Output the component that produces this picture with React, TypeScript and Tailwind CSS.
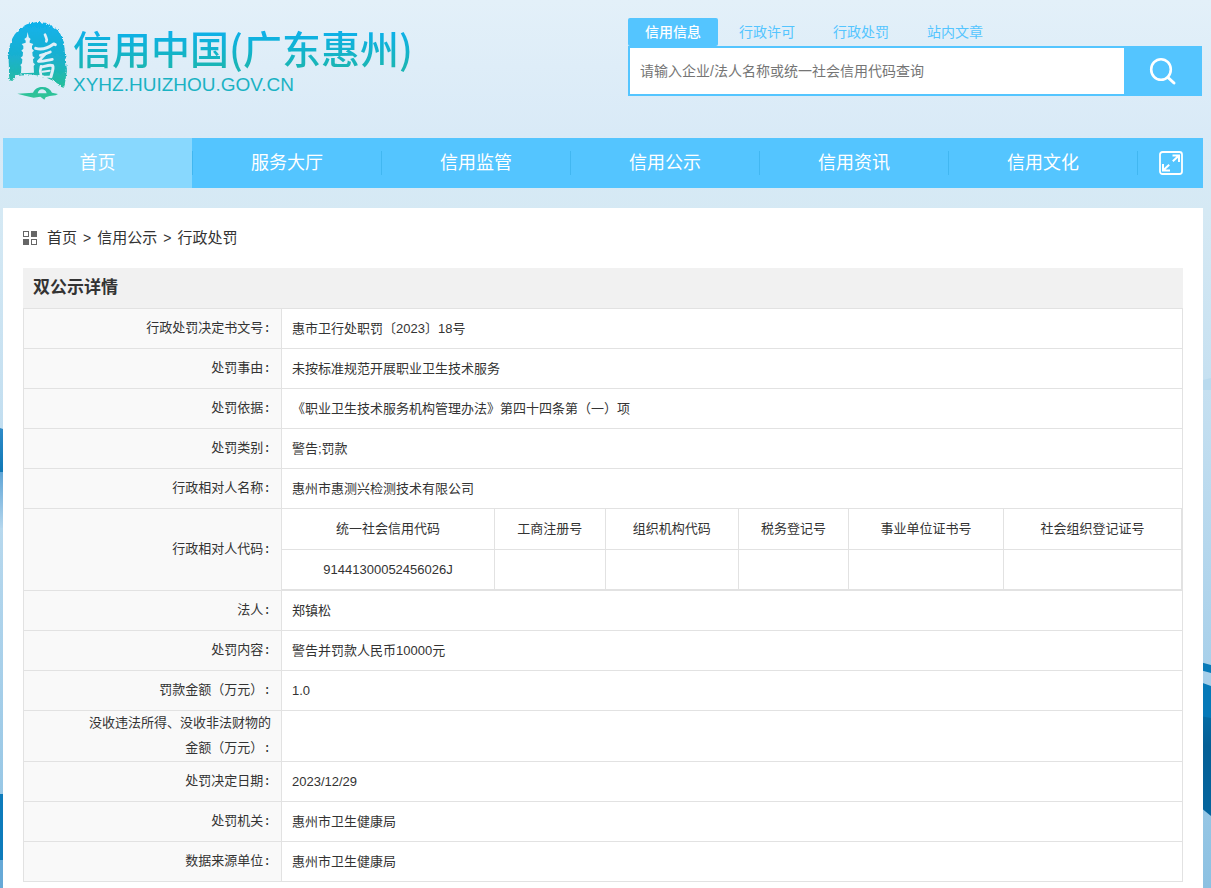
import React from "react";

const sans = "font-['Liberation_Sans','Noto_Sans_CJK_SC',sans-serif]";

const searchTabs = ["信用信息", "行政许可", "行政处罚", "站内文章"];
const navItems = ["首页", "服务大厅", "信用监管", "信用公示", "信用资讯", "信用文化"];
const breadcrumb = ["首页", "信用公示", "行政处罚"];

const codeColumns = [
  { name: "统一社会信用代码", value: "91441300052456026J", width: "w-[23.7%]" },
  { name: "工商注册号", value: "", width: "w-[12.3%]" },
  { name: "组织机构代码", value: "", width: "w-[14.8%]" },
  { name: "税务登记号", value: "", width: "w-[12.3%]" },
  { name: "事业单位证书号", value: "", width: "w-[17.2%]" },
  { name: "社会组织登记证号", value: "", width: "w-[19.7%]" },
];

type Row = { label: string; value: React.ReactNode; nested?: boolean };

const rows: Row[] = [
  { label: "行政处罚决定书文号:", value: "惠市卫行处职罚〔2023〕18号" },
  { label: "处罚事由:", value: "未按标准规范开展职业卫生技术服务" },
  { label: "处罚依据:", value: "《职业卫生技术服务机构管理办法》第四十四条第（一）项" },
  { label: "处罚类别:", value: "警告;罚款" },
  { label: "行政相对人名称:", value: "惠州市惠测兴检测技术有限公司" },
  { label: "行政相对人代码:", value: <CodeTable />, nested: true },
  { label: "法人:", value: "郑镇松" },
  { label: "处罚内容:", value: "警告并罚款人民币10000元" },
  { label: "罚款金额（万元）:", value: "1.0" },
  { label: "没收违法所得、没收非法财物的金额（万元）:", value: "" },
  { label: "处罚决定日期:", value: "2023/12/29" },
  { label: "处罚机关:", value: "惠州市卫生健康局" },
  { label: "数据来源单位:", value: "惠州市卫生健康局" },
];

function CodeTable() {
  return (
    <table className="w-full table-fixed border-separate border-spacing-0 border-r border-[#e2e2e2] text-center">
      <thead>
        <tr>
          {codeColumns.map((c) => (
            <th key={c.name} className={`h-[41px] border-b border-r border-[#e2e2e2] p-0 pb-0.5 font-normal last:border-r-0 ${c.width}`}>
              {c.name}
            </th>
          ))}
        </tr>
      </thead>
      <tbody>
        <tr>
          {codeColumns.map((c) => (
            <td key={c.name} className="h-10 border-b border-r border-[#e2e2e2] p-0 last:border-r-0">
              {c.value}
            </td>
          ))}
        </tr>
      </tbody>
    </table>
  );
}

function Backdrop() {
  return (
    <svg className="absolute inset-0 -z-10 h-full w-full" viewBox="0 0 1211 888" preserveAspectRatio="none" aria-hidden="true">
      <defs>
        <linearGradient id="sky" x1="0" y1="0" x2="0" y2="1">
          <stop offset="0" stopColor="#e3f0f9" />
          <stop offset="0.15" stopColor="#d9eaf7" />
          <stop offset="0.24" stopColor="#d5e9f4" />
          <stop offset="0.48" stopColor="#c2def0" />
          <stop offset="0.75" stopColor="#a8d0ea" />
          <stop offset="1" stopColor="#8cc1e2" />
        </linearGradient>
        <linearGradient id="waveA" x1="0" y1="0" x2="0" y2="1">
          <stop offset="0" stopColor="#2f8bc8" />
          <stop offset="1" stopColor="#0f78b6" />
        </linearGradient>
        <linearGradient id="mist" x1="0" y1="0" x2="0" y2="1">
          <stop offset="0" stopColor="#5fa5d6" />
          <stop offset="1" stopColor="#b4d6ed" />
        </linearGradient>
        <linearGradient id="waveB" x1="0" y1="0" x2="0" y2="1">
          <stop offset="0" stopColor="#046ba4" />
          <stop offset="0.3" stopColor="#045f96" />
          <stop offset="1" stopColor="#04659e" />
        </linearGradient>
      </defs>
      <rect width="1211" height="888" fill="url(#sky)" />
      <path d="M0 428 L6 430 V472 H0 Z" fill="url(#waveA)" />
      <rect y="472" width="6" height="56" fill="url(#mist)" />
      <rect y="794" width="6" height="66" fill="#0d7bbb" />
      <rect y="860" width="6" height="28" fill="#66a9d7" />
      <path d="M1203 380 L1211 378 V390 H1203 Z" fill="#b9daee" />
      <path d="M1200 662 L1211 665 V673 L1200 670 Z" fill="#087ab8" />
      <path d="M1200 682 L1211 686 V718 H1200 Z" fill="#0579b8" />
      <path d="M1200 716 L1211 718 V816 L1200 807 Z" fill="url(#waveB)" />
    </svg>
  );
}

function Emblem() {
  return (
    <svg className="h-20 w-[62px] shrink-0" viewBox="20 30 186 240" aria-hidden="true">
      <defs>
        <linearGradient id="ink" gradientUnits="userSpaceOnUse" x1="0" y1="36" x2="0" y2="268">
          <stop offset="0" stopColor="#10b2ec" />
          <stop offset="0.45" stopColor="#1ab0cf" />
          <stop offset="0.8" stopColor="#23bd9f" />
          <stop offset="1" stopColor="#33c596" />
        </linearGradient>
        <filter id="rough" x="-10%" y="-10%" width="120%" height="120%">
          <feTurbulence type="fractalNoise" baseFrequency="0.14" numOctaves="2" seed="4" />
          <feDisplacementMap in="SourceGraphic" scale="12" xChannelSelector="R" yChannelSelector="G" />
        </filter>
      </defs>
      <path
        d="M27 212 L25 150 C24 105 34 76 60 56 C84 34 124 30 150 46 C184 62 192 90 194 130 L200 182 L192 230 L180 228 C162 208 104 184 46 196 L38 212 Z"
        fill="url(#ink)"
        filter="url(#rough)"
      />
      <path
        d="M82 66 L85 82 L91 87 L88 92 L88 98 L99 102 L95 108 L95 116 L101 122 L96 127 L97 138 L103 143 L98 148 L99 158 L104 163 L100 168 L101 188 L62 190 L63 170 L60 165 L65 160 L66 148 L61 143 L67 138 L68 127 L63 122 L69 116 L69 108 L64 102 L76 98 L76 92 L72 87 L79 82 Z"
        fill="#e0eff8"
      />
      <g fill="none" stroke="#e0eff8" strokeLinecap="round" strokeLinejoin="round">
        <path d="M134 74 C137 84 142 87 138 94" strokeWidth="8" />
        <path d="M106 115 C124 120 142 115 160 102 L165 104" strokeWidth="9" />
        <path d="M120 136 C132 133 140 130 150 126" strokeWidth="8" />
        <path d="M136 131 L114 154 C128 156 140 150 156 148" strokeWidth="8" />
        <path d="M122 169 C119 178 119 186 122 196" strokeWidth="8" />
        <path d="M124 171 C136 169 148 162 157 167 C161 174 155 186 152 200" strokeWidth="9" />
        <path d="M126 185 L148 182 M124 200 L150 200" strokeWidth="6" />
      </g>
      <path
        d="M51 251 L98 248 C104 236 114 231 126 231 C140 231 150 237 155 248 L173 252 L166 256 L148 258 L136 262 L132 269 L120 260 L100 263 L74 257 Z M112 250 H139 C137 241 131 238 125 238 C119 238 114 242 112 250 Z"
        fill="url(#ink)"
        fillRule="evenodd"
      />
    </svg>
  );
}

function SearchIcon() {
  return (
    <svg className="h-8 w-8" viewBox="0 0 32 32" fill="none" stroke="white" strokeLinecap="round" aria-hidden="true">
      <ellipse cx="15" cy="14.5" rx="9.8" ry="10.3" strokeWidth="2.6" />
      <path d="M22 22.5 L28 28" strokeWidth="3" />
    </svg>
  );
}

function ExpandIcon() {
  return (
    <svg className="h-6 w-6" viewBox="0 0 24 24" fill="none" stroke="white" strokeWidth="2" aria-hidden="true">
      <rect x="1" y="1" width="22" height="22" rx="2.5" strokeWidth="1.8" />
      <path d="M13.5 4.5 H20 V11 M20 4.5 L13.8 10.2" />
      <path d="M4 13 V19.5 H11 M4 19.5 L10.2 13.8" />
    </svg>
  );
}

function GridIcon() {
  return (
    <svg className="h-3.5 w-3.5" viewBox="0 0 14 14" aria-hidden="true">
      <rect x="0.5" y="0.5" width="5" height="5" fill="none" stroke="#666" />
      <rect x="8" y="0" width="6" height="6" fill="#666" />
      <rect x="0" y="8" width="6" height="6" fill="#666" />
      <rect x="8.5" y="8.5" width="5" height="5" fill="none" stroke="#666" />
    </svg>
  );
}

export default function App() {
  return (
    <div className={`relative isolate flex min-h-screen flex-col pl-[3px] pr-2 text-[#333] ${sans}`}>
      <Backdrop />

      <header className="flex h-[138px] items-start justify-between">
        <a href="#" className="flex items-start pl-1 pt-5">
          <Emblem />
          <span className="flex flex-col pl-1">
            <span className="bg-linear-to-b from-[#0fb0ea] from-20% to-[#1ab5b5] to-85% bg-clip-text font-['Noto_Sans_CJK_SC',sans-serif] text-[39px] font-medium leading-[54px] text-transparent">
              信用中国(广东惠州)
            </span>
            <span className="font-['Liberation_Sans',sans-serif] text-[19px] leading-[22px] text-[#1ab2c3]">XYHZ.HUIZHOU.GOV.CN</span>
          </span>
        </a>

        <form className="mr-px w-[574px] pt-[18px]" onSubmit={(e) => e.preventDefault()}>
          <div className="flex gap-1">
            {searchTabs.map((tab, i) => (
              <button
                key={tab}
                type="button"
                className={`h-7 w-[90px] rounded-xs text-sm ${i === 0 ? "bg-[#54c5ff] font-medium text-white" : "text-[#54c5ff]"}`}
              >
                {tab}
              </button>
            ))}
          </div>
          <div className="flex h-[50px] border-2 border-[#54c5ff] bg-[#54c5ff]">
            <input
              type="text"
              aria-label="搜索"
              placeholder="请输入企业/法人名称或统一社会信用代码查询"
              className="min-w-0 flex-1 bg-white px-2.5 text-sm outline-none placeholder:text-[#757575]"
            />
            <button type="submit" aria-label="查询" className="flex w-[76px] items-center justify-center">
              <SearchIcon />
            </button>
          </div>
        </form>
      </header>

      <nav className="flex h-[50px] items-center bg-[#54c5ff] text-lg text-white">
        {navItems.map((item, i) => (
          <a key={item} href="#" className={`flex h-full flex-1 items-center ${i === 0 ? "bg-[#88d8fe]" : ""}`}>
            {i > 0 && <span className="h-6 w-px bg-[#41b7f1]" />}
            <span className="flex-1 text-center">{item}</span>
          </a>
        ))}
        <div className="flex w-[66px] items-center">
          <span className="h-6 w-px bg-[#41b7f1]" />
          <button type="button" aria-label="展开" className="flex flex-1 justify-center">
            <ExpandIcon />
          </button>
        </div>
      </nav>

      <main className="mt-5 flex-1 bg-white px-5 pb-1.5">
        <div className="flex h-[60px] items-center gap-2.5 text-[15px]">
          <GridIcon />
          <div className="flex items-center gap-1.5">
            {breadcrumb.map((item, i) => (
              <React.Fragment key={item}>
                {i > 0 && <span className="text-sm">&gt;</span>}
                <a href="#">{item}</a>
              </React.Fragment>
            ))}
          </div>
        </div>

        <h1 className="flex h-10 items-center bg-[#f1f1f1] px-2.5 text-[17px] font-bold">双公示详情</h1>
        <table className="w-full border-collapse text-[13px] leading-[25px]">
          <tbody>
            {rows.map((row) => (
              <tr key={row.label} className="h-10">
                <th
                  scope="row"
                  className="w-[258px] border border-[#e2e2e2] bg-[#f9f9f9] py-0 pl-[60px] pr-2.5 text-right font-['Liberation_Mono','Noto_Sans_CJK_SC',monospace] font-normal"
                >
                  {row.label}
                </th>
                <td className={`border border-[#e2e2e2] py-0 ${row.nested ? "px-0" : "px-2.5"}`}>{row.value}</td>
              </tr>
            ))}
          </tbody>
        </table>
      </main>
    </div>
  );
}
